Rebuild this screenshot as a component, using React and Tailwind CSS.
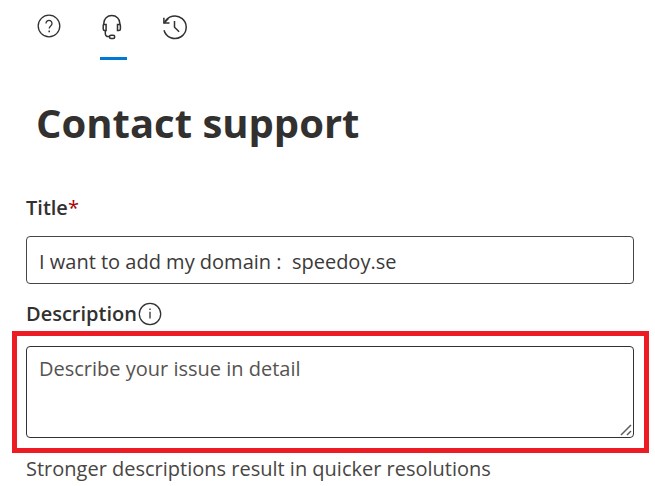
import React, { useState } from 'react';

const HelpIcon = () => (
  <svg width="24" height="24" viewBox="0 0 24 24" fill="none" stroke="currentColor" strokeWidth="1.3">
    <circle cx="12" cy="12" r="10.8" />
    <path d="M9 9.4a3 3 0 1 1 4.9 2.3c-1 .8-1.7 1.4-1.7 2.9" />
    <path d="M12.2 16.6v1.6" strokeWidth="1.5" />
  </svg>
);

const HeadsetIcon = () => (
  <svg width="24" height="26" viewBox="0 0 24 26" fill="none" stroke="currentColor" strokeWidth="1.5">
    <path d="M3.800 10.400V9.200C3.800 4.800 7.300 1.600 11.800 1.600s8 3.200 8 7.600v1.200" />
    <path d="M3.500 10.400h2.600v6.200H4.700c-.9 0-1.500-.6-1.500-1.500v-3.600z" />
    <path d="M20.100 10.400h-2.600v6.200h1.400c.9 0 1.500-.6 1.500-1.500v-3.600z" />
    <path d="M5.300 16.600v2.600c0 2 1.200 3.400 3.200 3.400h1" />
    <rect x="9.500" y="21.200" width="5.200" height="3.200" rx="1.500" />
  </svg>
);

const HistoryIcon = () => (
  <svg width="26" height="26" viewBox="0 0 26 26" fill="none" stroke="currentColor" strokeWidth="1.5">
    <path d="M1 16.200A11.300 11.300 0 1 0 1.500 8.800" />
    <path d="M.9 3.700v5.400h5.600" />
    <path d="M1 9l4.200-4.200" />
    <path d="M11.500 7v6.200l4.600 4.600" />
  </svg>
);

const InfoIcon = () => (
  <svg width="24" height="24" viewBox="0 0 24 24" fill="none" stroke="currentColor" strokeWidth="1.3">
    <circle cx="12" cy="12" r="10.700" />
    <path d="M12 9.800v6.800M12 6.500v1.600" />
  </svg>
);

const tabs = [
  { id: 'help', label: 'Help', icon: HelpIcon },
  { id: 'support', label: 'Contact support', icon: HeadsetIcon },
  { id: 'history', label: 'History', icon: HistoryIcon },
];

const App = () => {
  const [activeTab, setActiveTab] = useState('support');
  const [title, setTitle] = useState('I want to add my domain :  speedoy.se');
  const [description, setDescription] = useState('');

  return (
    <main className="pl-[26px] pr-[21px] pt-3.5 bg-white text-[#323130] font-['Segoe_UI','Open_Sans',sans-serif] text-xl leading-7">
      <nav className="flex gap-9 pl-[11px]">
        {tabs.map(({ id, label, icon: Icon }) => (
          <button
            key={id}
            type="button"
            aria-label={label}
            onClick={() => setActiveTab(id)}
            className={`flex h-[46px] w-[27px] items-start border-b-3 ${
              activeTab === id ? 'border-[#0078d4]' : 'border-transparent'
            }`}
          >
            <Icon />
          </button>
        ))}
      </nav>

      <h1 className="mt-[39px] pl-2.5 text-[40px] leading-12 font-bold">Contact support</h1>

      <form className="mt-[47px]">
        <label htmlFor="title" className="block font-semibold">
          Title<span className="font-normal text-[#a80000]">*</span>
        </label>
        <input
          id="title"
          type="text"
          value={title}
          onChange={(e) => setTitle(e.target.value)}
          className="mt-3.5 block h-12 w-full rounded-sm border border-[#484644] px-3 pt-0.5 text-[#3b3a39] outline-none"
        />

        <div className="mt-4 flex items-center gap-px">
          <label htmlFor="description" className="font-semibold">Description</label>
          <button type="button" aria-label="More about the description">
            <InfoIcon />
          </button>
        </div>

        <div className="relative -ml-3.5 -mr-[15px] mt-[3px] border-5 border-[#ed1c24] pl-[9px] pr-2.5 py-2.5">
          <textarea
            id="description"
            value={description}
            onChange={(e) => setDescription(e.target.value)}
            placeholder="Describe your issue in detail"
            className="block h-[92px] w-full resize-y rounded-sm border border-[#323130] px-3 py-2 outline-none placeholder:text-[#555351] [&::-webkit-resizer]:bg-transparent"
          />
          {/* resize grip */}
          <svg
            width="12"
            height="12"
            viewBox="0 0 12 12"
            stroke="#605e5c"
            strokeWidth="1.5"
            className="pointer-events-none absolute right-3 bottom-3"
          >
            <path d="M1 11L11 1M7 11l4-4" />
          </svg>
        </div>
        <p className="mt-0.5 text-[#484644]">Stronger descriptions result in quicker resolutions</p>
      </form>
    </main>
  );
};

export default App;
